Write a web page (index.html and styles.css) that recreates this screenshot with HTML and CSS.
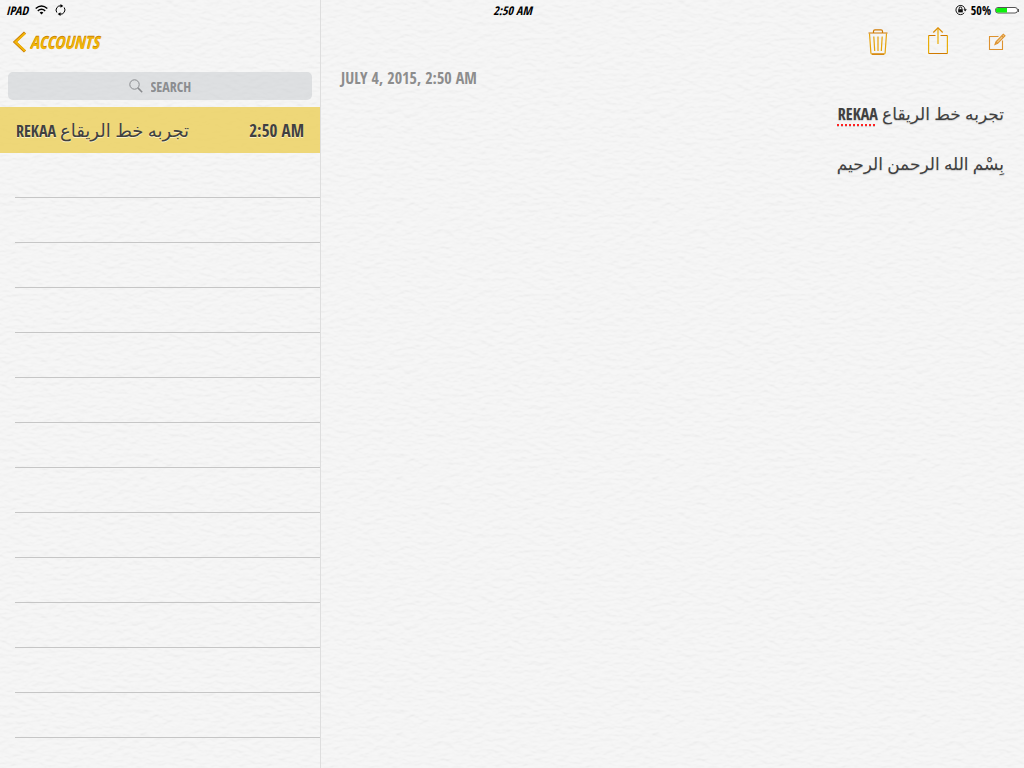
FILE: index.html
```html
<!DOCTYPE html>
<html lang="en">
<head>
<meta charset="utf-8">
<meta name="viewport" content="width=device-width, initial-scale=1">
<title>Notes</title>
<link rel="stylesheet" href="styles.css">
</head>
<body>
<div class="app">
  <header class="status">
    <div class="status-left">
      <span>IPAD</span>
      <svg width="13" height="10" viewBox="0 0 13 10" fill="none" stroke="#000" stroke-width="1.400" aria-label="Wi-Fi"><path d="M.7 3.600Q6.500-1.600 12.300 3.600M2.800 5.900Q6.500 2.700 10.200 5.900"/><path d="M4.600 7.500Q6.500 6 8.400 7.500L6.500 9.500Z" fill="#000" stroke="none"/></svg>
      <svg width="11" height="12" viewBox="0 0 11 12" fill="none" stroke="#000" stroke-width="1" aria-label="Syncing"><path d="M1.800 8.500A4.300 4.300 0 0 1 6.300 1.900M9.200 3.500A4.300 4.300 0 0 1 4.700 10.100"/><path d="M5.500 0 8.300 1.900 5.500 3.800ZM5.500 12 2.700 10.100 5.500 8.200Z" fill="#000" stroke="none"/></svg>
    </div>
    <time>2:50 AM</time>
    <div class="status-right">
      <svg width="12" height="12" viewBox="0 0 12 12" fill="none" stroke="#111" stroke-width="1" aria-label="Rotation lock"><path d="M9.200 8.800A4.600 4.600 0 1 1 10.100 5.500"/><path d="M8.500 5.200H11.800L10.100 7.500Z" fill="#111" stroke="none"/><path d="M3.200 5.200H7.800V8.400H3.200Z" fill="#111" stroke="none"/><path d="M4.200 5.300V4.300a1.300 1.300 0 0 1 2.600 0v1"/></svg>
      <span>50%</span>
      <svg width="24" height="7" viewBox="0 0 24 7" aria-label="Battery"><rect x=".5" y=".5" width="22" height="5.500" rx="2.500" fill="#fff" stroke="#555"/><path d="M3 1H12V5.500H3A2 2 0 0 1 3 1" fill="#0cf00c"/><path d="M23.500 2V5" stroke="#555"/></svg>
    </div>
  </header>
  <div class="panes">
    <aside class="sidebar">
      <nav class="nav">
        <a class="back" href="#accounts">
          <svg width="15" height="22" viewBox="0 0 15 22" fill="none"><path d="M13 1.500 3 11 13 20.500" stroke="#c87900" stroke-width="3"/><path d="M13 2.200 3.500 11 13 20" stroke="#f1b50c" stroke-width="2.200"/></svg>
          <span>ACCOUNTS</span>
        </a>
      </nav>
      <label class="search">
        <svg width="14" height="14" viewBox="0 0 14 14" fill="none" stroke="#898b8e" stroke-width="1" aria-hidden="true"><circle cx="5.500" cy="5.500" r="4.700"/><path d="M8.900 8.900 13.200 13.200" stroke-width="1.500"/></svg>
        <input type="text" placeholder="SEARCH" aria-label="Search">
      </label>
      <ul class="list">
        <li class="note"><a href="#note"><span><b>REKAA</b> <bdi class="arabic" lang="ar">تجربه خط الريقاع</bdi></span><time>2:50 AM</time></a></li>
        <li class="rule"></li><li class="rule"></li><li class="rule"></li><li class="rule"></li><li class="rule"></li><li class="rule"></li><li class="rule"></li><li class="rule"></li><li class="rule"></li><li class="rule"></li><li class="rule"></li><li class="rule"></li><li class="rule"></li>
      </ul>
    </aside>
    <main class="editor">
      <div class="tools">
        <button type="button" aria-label="Delete">
          <svg width="20" height="26" viewBox="0 0 20 26" fill="none" stroke="#e6a30c" stroke-width="1.200"><path d="M1.500 4.500 2.900 24Q3 25.200 4.300 25.200H15.700Q17 25.200 17.100 24L18.500 4.500"/><path d="M5.800 7.500 6.700 22M10 7.500V22M14.200 7.500 13.300 22"/><path d="M.5 4H19.500M5.500 4V2.200Q5.500.8 7 .8H13Q14.500.8 14.500 2.200V4M4 25.200H16" stroke="#cf7900"/></svg>
        </button>
        <button type="button" aria-label="Share">
          <svg width="20" height="31" viewBox="0 0 20 31" fill="none" stroke="#e9ad08" stroke-width="1.200"><path d="M.6 8.500V26.500M19.400 8.500V26.500M10 1V17"/><path d="M7.500 8.500H.6M12.500 8.500H19.400M.6 26.500H19.400" stroke="#cf7900"/><path d="M5.300 5.500 10 .8 14.700 5.500" stroke="#dc8d05"/></svg>
        </button>
        <button type="button" aria-label="New note">
          <svg width="18" height="18" viewBox="0 0 18 18" fill="none" stroke="#dd922f" stroke-width="1.100"><path d="M10.500 3.500H1.500V16.500H14.500V7.500"/><path d="M7 11.500 8 8.800 15.300 1.200 17 2.800 9.700 10.300Z" fill="#efc887"/><path d="M8 8.800 9.700 10.300M13.700 2.800 15.300 4.400"/></svg>
        </button>
      </div>
      <time class="date">JULY 4, 2015, 2:50 AM</time>
      <article class="text" dir="rtl" lang="ar">
        <p>تجربه خط الريقاع <b class="misspelt" lang="en">REKAA</b></p>
        <p>بِسْم الله الرحمن الرحيم</p>
      </article>
    </main>
  </div>
</div>
</body>
</html>
```
FILE: styles.css
```css
* { box-sizing: border-box; }

body {
  margin: 0;
  color: #404040;
  font-family: "Open Sans Condensed", "Liberation Sans Narrow", "Roboto Condensed", "Lato", "DejaVu Sans", sans-serif;
  background-color: #f5f5f5;
  background-image: url("data:image/svg+xml,%3Csvg xmlns='http://www.w3.org/2000/svg' width='256' height='256'%3E%3Cfilter id='p' x='0' y='0' width='100%25' height='100%25' color-interpolation-filters='sRGB'%3E%3CfeTurbulence type='fractalNoise' baseFrequency='.12 .25' numOctaves='2' seed='4' stitchTiles='stitch' result='n'/%3E%3CfeDiffuseLighting in='n' surfaceScale='1' lighting-color='white'%3E%3CfeDistantLight azimuth='270' elevation='72'/%3E%3C/feDiffuseLighting%3E%3C/filter%3E%3Crect width='256' height='256' filter='url(%23p)' opacity='.15'/%3E%3C/svg%3E");
}

.app { display: flex; flex-direction: column; min-height: 100vh; }

svg { flex: none; display: block; }

.status {
  display: grid;
  grid-template-columns: 1fr auto 1fr;
  align-items: center;
  height: 20px;
  padding: 0 5px 0 6px;
  color: #000;
  font-size: 12px;
  font-weight: 700;
}
.status-left, .status-right { display: flex; align-items: center; gap: 7px; }
.status-right { justify-content: flex-end; gap: 4px; }
.status-left, .status > time { font-style: italic; }

.panes { flex: 1; display: flex; }

.sidebar {
  flex: none;
  width: 321px;
  margin-top: -20px;
  padding-top: 20px;
  border-right: 1px solid #dedede;
}

.nav { display: flex; align-items: center; height: 44px; padding: 0 12px; }
.back {
  display: flex;
  align-items: center;
  gap: 3px;
  color: #efb30a;
  font-size: 17px;
  font-weight: 700;
  font-style: italic;
  text-decoration: none;
  text-shadow: 0 -1px 0 #c98208;
}

.search {
  display: flex;
  align-items: center;
  justify-content: center;
  gap: 8px;
  height: 28px;
  margin: 8px 8px 7px;
  border-radius: 5px;
  background: rgba(198, 201, 206, .5);
}
.search input {
  width: 41px;
  padding: 0;
  border: 0;
  outline: 0;
  background: none;
  color: #404040;
  font-family: inherit;
  font-size: 14px;
  font-weight: 700;
}
.search input::placeholder { color: #8b8d90; opacity: 1; }

.list { margin: 0; padding: 0; list-style: none; }
.note { background: rgba(236, 209, 98, .85); }
.note a {
  display: flex;
  align-items: center;
  justify-content: space-between;
  height: 46px;
  padding: 0 16px;
  color: #404040;
  font-size: 16px;
  text-decoration: none;
  text-shadow: 0 1px 0 #faf0c4;
}
.note time { font-size: 17px; font-weight: 700; }
.arabic { font-size: 18px; }
.rule { height: 45px; margin-left: 15px; border-bottom: 1px solid #c6c6c6; }

.editor { flex: 1; min-width: 0; padding: 0 20px; }
.tools {
  display: flex;
  align-items: center;
  justify-content: flex-end;
  gap: 40px;
  height: 44px;
  margin-right: -2px;
}
.tools button { padding: 0; border: 0; background: none; cursor: pointer; }
.date { display: block; margin-top: 4px; color: #8d8d8d; font-size: 16px; font-weight: 700; line-height: 20px; }
.text { padding-top: 14px; font-size: 17px; }
.text p { margin: 0 0 26px; line-height: 24px; text-shadow: 0 1px 1px #ccc; }
.misspelt {
  font-size: 16px;
  text-decoration: underline dotted #f22 2px;
  text-underline-offset: 4px;
}
```
